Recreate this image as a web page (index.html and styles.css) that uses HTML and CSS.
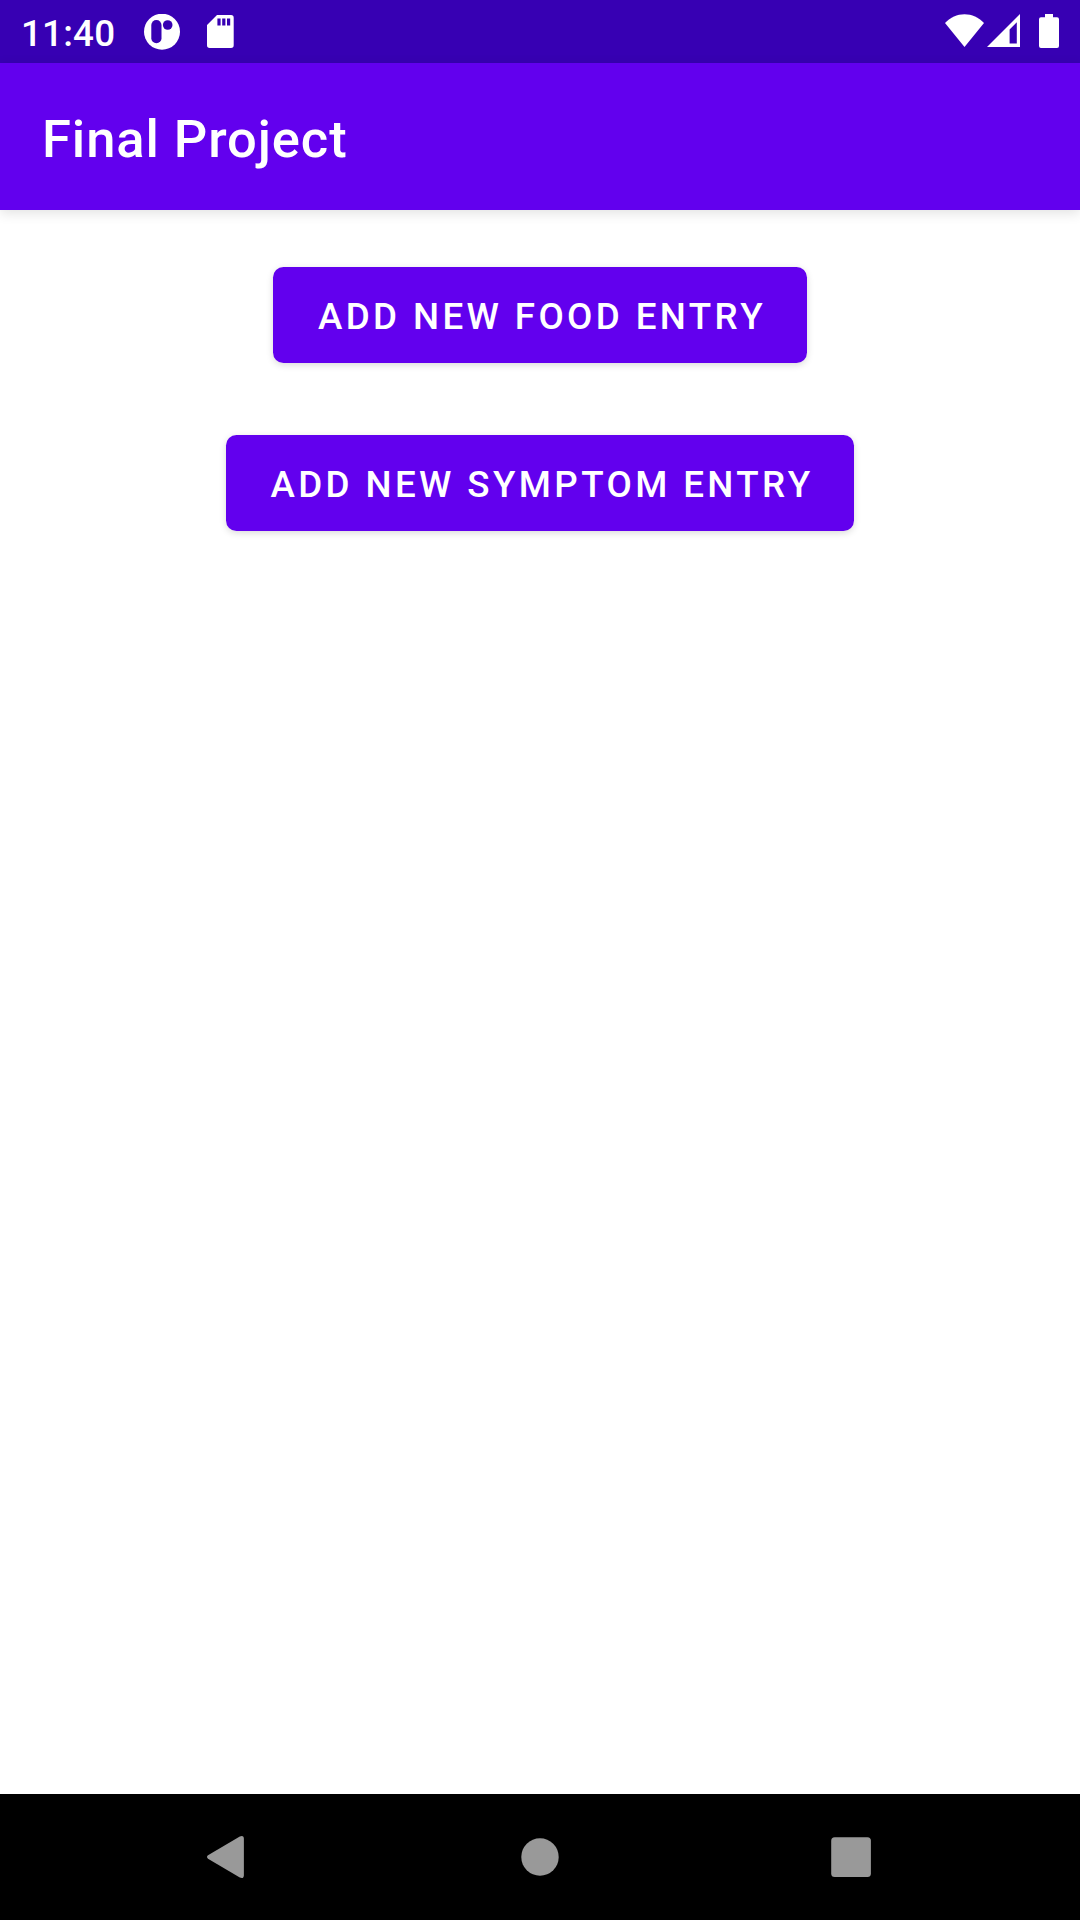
FILE: index.html
```html
<!DOCTYPE html>
<html lang="en">
<head>
<meta charset="utf-8">
<title>Final Project</title>
<link rel="stylesheet" href="styles.css">
</head>
<body>
<div class="screen">
  <div class="status-bar">
    <span class="clock">11:40</span>
    <svg class="icon-app" width="36" height="36" viewBox="0 0 36 36">
      <circle class="glyph" cx="18" cy="17.700" r="18"/>
      <rect class="cutout" x="7.300" y="6" width="10.200" height="23.300" rx="5.100"/>
      <circle class="cutout" cx="23.700" cy="11" r="4.800"/>
    </svg>
    <svg class="icon-sd" width="27" height="34" viewBox="0 0 27 34">
      <path class="glyph" d="M10 0H24a2.700 2.700 0 0 1 2.700 2.700V30.300a2.700 2.700 0 0 1-2.700 2.700H2.700a2.700 2.700 0 0 1-2.700-2.700V10z"/>
      <path class="cutout" d="M10.400 3.500h3.200v7h-3.200zM15.200 3.500h3.200v7h-3.200zM20 3.500h3.200v7H20z"/>
    </svg>
    <svg class="icon-wifi" width="39" height="33" viewBox="0 0 39 33">
      <path class="glyph" d="M0 9C5.500 3.500 12 .2 19.500 .2S33.500 3.500 39 9L19.500 33z"/>
    </svg>
    <svg class="icon-signal" width="33" height="33" viewBox="0 0 33 33">
      <path class="glyph" fill-rule="evenodd" d="M33 0V33H0zM29.800 8.300L22.600 15.500V29.500H29.800z"/>
    </svg>
    <svg class="icon-battery" width="20" height="34" viewBox="0 0 20 34">
      <path class="glyph" d="M6 0h8v3.200h4a2 2 0 0 1 2 2V32a2 2 0 0 1-2 2H2a2 2 0 0 1-2-2V5.200a2 2 0 0 1 2-2h4z"/>
    </svg>
  </div>
  <header class="app-bar"><h1 class="title">Final Project</h1></header>
  <main class="content">
    <button class="button button-food" type="button">ADD NEW FOOD ENTRY</button>
    <button class="button button-symptom" type="button">ADD NEW SYMPTOM ENTRY</button>
  </main>
  <nav class="nav-bar">
    <svg class="nav-icon" width="126" height="126" viewBox="0 0 126 126">
      <path d="M42 61.300L73.800 42.400Q77.900 40.700 77.900 45V81Q77.900 85.300 73.800 83.600L42 64.700Q40 63 42 61.300z"/>
    </svg>
    <svg class="nav-icon" width="126" height="126" viewBox="0 0 126 126">
      <circle cx="63" cy="63" r="18.700"/>
    </svg>
    <svg class="nav-icon" width="126" height="126" viewBox="0 0 126 126">
      <rect x="43.200" y="43.200" width="39.700" height="39.700" rx="3.500"/>
    </svg>
  </nav>
</div>
</body>
</html>
```
FILE: styles.css
```css
* {
  box-sizing: border-box;
}

body {
  margin: 0;
  background: #fff;
  font-family: Roboto, "Liberation Sans", sans-serif;
  font-weight: 500;
  color: #fff;
}

.screen {
  display: flex;
  flex-direction: column;
  width: 1080px;
  height: 1920px;
}

.status-bar {
  display: flex;
  align-items: flex-start;
  height: 63px;
  padding: 14px 21px 0;
  background: #3700b3;
}

.clock {
  width: 123px;
  padding-top: 2px;
  font-size: 36.75px;
  line-height: 36px;
  letter-spacing: 0.2px;
}

.icon-sd {
  margin: 1px 0 0 27px;
}

.icon-wifi {
  margin-left: auto;
}

.icon-signal {
  margin: 0 19px 0 3px;
}

.glyph {
  fill: #fff;
}

.cutout {
  fill: #3700b3;
}

.app-bar {
  display: flex;
  align-items: center;
  height: 147px;
  padding: 5px 42px 0;
  background: #6200ee;
  box-shadow: 0 3px 12px rgba(0, 0, 0, 0.12);
}

.title {
  margin: 0;
  font-size: 52.5px;
  font-weight: 500;
  line-height: 62px;
  letter-spacing: 0.92px;
}

.content {
  display: flex;
  flex: 1;
  flex-direction: column;
  align-items: center;
  gap: 72px;
  padding-top: 57px;
}

.button {
  height: 96px;
  padding: 2px 0 0 4px;
  border: 0;
  border-radius: 10.5px;
  background: #6200ee;
  box-shadow: 0 2px 7px rgba(0, 0, 0, 0.15);
  color: #fff;
  font: 500 36.75px/43px Roboto, "Liberation Sans", sans-serif;
  letter-spacing: 3.38px;
  white-space: nowrap;
}

.button-food {
  width: 534px;
}

.button-symptom {
  width: 628px;
}

.nav-bar {
  display: flex;
  justify-content: center;
  gap: 185px;
  height: 126px;
  background: #000;
}

.nav-icon {
  fill: #999;
}
```
